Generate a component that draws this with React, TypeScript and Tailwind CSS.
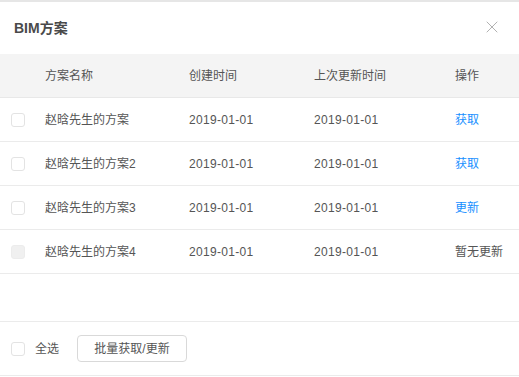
import { X } from "lucide-react";

type Row = { name: string; created: string; updated: string; action: string; disabled?: boolean };

const rows: Row[] = [
  { name: "赵晗先生的方案", created: "2019-01-01", updated: "2019-01-01", action: "获取" },
  { name: "赵晗先生的方案2", created: "2019-01-01", updated: "2019-01-01", action: "获取" },
  { name: "赵晗先生的方案3", created: "2019-01-01", updated: "2019-01-01", action: "更新" },
  { name: "赵晗先生的方案4", created: "2019-01-01", updated: "2019-01-01", action: "暂无更新", disabled: true },
];

const Checkbox = ({ disabled }: { disabled?: boolean }) => (
  <span
    className={
      disabled
        ? "block w-[14px] h-[14px] rounded-[3px] bg-[#f0f0f0] border border-[#ececec]"
        : "block w-[14px] h-[14px] rounded-[3px] bg-white border border-[#e3e3e3]"
    }
  />
);

export default function App() {
  return (
    <div
      className="w-[519px] h-[377px] bg-white text-[12px] text-[#555] border-t-2 border-[#e6e6e6] flex flex-col"
      style={{ fontFamily: '"Liberation Sans", "Noto Sans CJK SC", sans-serif' }}
    >
      <div className="h-[52px] shrink-0 flex items-center justify-between pl-[14px] pr-[17px]">
        <h2 className="text-[14px] font-bold text-[#4a4a4a]">BIM方案</h2>
        <X size={20} strokeWidth={1.1} className="text-[#aaa] -mt-[2px]" />
      </div>

      <div className="h-[44px] shrink-0 flex items-center bg-[#f4f4f4] border-b border-[#e8e8e8]">
        <div className="w-[45px]" />
        <div className="w-[144px]">方案名称</div>
        <div className="w-[125px]">创建时间</div>
        <div className="w-[141px]">上次更新时间</div>
        <div>操作</div>
      </div>

      {rows.map((r) => (
        <div key={r.name} className="h-[44px] shrink-0 flex items-center border-b border-[#ebebeb]">
          <div className="w-[45px] pl-[11px]">
            <Checkbox disabled={r.disabled} />
          </div>
          <div className="w-[144px]">{r.name}</div>
          <div className="w-[125px] tracking-[0.3px]">{r.created}</div>
          <div className="w-[141px] tracking-[0.3px]">{r.updated}</div>
          <div className={r.disabled ? "text-[#555]" : "text-[#1890ff]"}>{r.action}</div>
        </div>
      ))}

      <div className="h-[48px] shrink-0 border-b border-[#ebebeb]" />

      <div className="h-[54px] shrink-0 flex items-center pl-[11px] border-b border-[#ebebeb]">
        <Checkbox />
        <span className="ml-[10px]">全选</span>
        <button className="ml-[18px] w-[110px] h-[27px] rounded-[4px] border border-[#d9d9d9] bg-white text-[#555]">
          批量获取/更新
        </button>
      </div>
    </div>
  );
}
